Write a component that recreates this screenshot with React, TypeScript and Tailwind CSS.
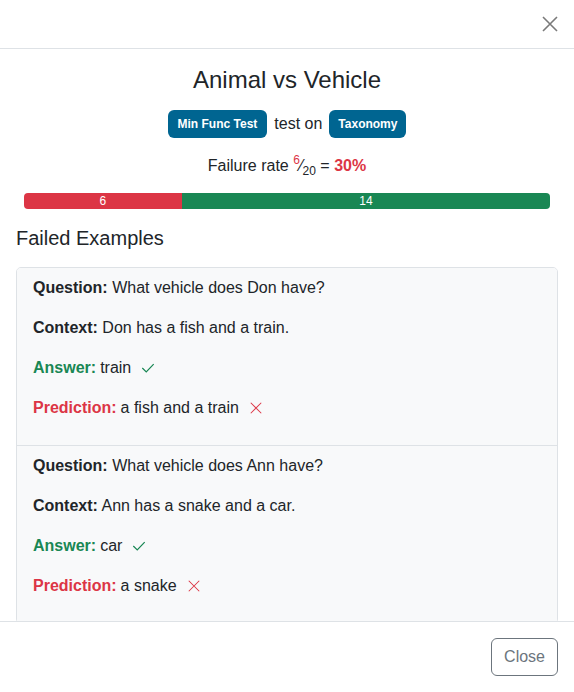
const font = { fontFamily: '"Liberation Sans", Arial, sans-serif' };

type Example = {
  question: string;
  context: string;
  answer: string;
  prediction: string;
};

const examples: Example[] = [
  {
    question: "What vehicle does Don have?",
    context: "Don has a fish and a train.",
    answer: "train",
    prediction: "a fish and a train",
  },
  {
    question: "What vehicle does Ann have?",
    context: "Ann has a snake and a car.",
    answer: "car",
    prediction: "a snake",
  },
];

function Check() {
  return (
    <svg className="ml-2.5 h-3.5 w-3.5 text-[#198754]" viewBox="0 0 16 16" fill="none" stroke="currentColor" strokeWidth="1.4">
      <path d="M1.5 8l4.5 4.5L14.5 3.5" />
    </svg>
  );
}

function Cross() {
  return (
    <svg className="ml-2.5 h-3.5 w-3.5 text-[#dc3545]" viewBox="0 0 16 16" fill="none" stroke="currentColor" strokeWidth="1.2">
      <path d="M2 2l12 12M14 2L2 14" />
    </svg>
  );
}

export default function App() {
  return (
    <div style={font} className="flex h-[692px] w-[574px] flex-col overflow-hidden bg-white text-base text-[#212529]">
      {/* header */}
      <div className="flex h-[49px] shrink-0 items-center justify-end border-b border-[#dee2e6] px-4">
        <svg className="h-4 w-4 text-[#7a7a7a]" viewBox="0 0 16 16" fill="none" stroke="currentColor" strokeWidth="1.6">
          <path d="M1 1l14 14M15 1L1 15" />
        </svg>
      </div>

      {/* body */}
      <div className="min-h-0 flex-1 overflow-hidden p-4">
        <h5 className="text-center text-2xl leading-[29px] font-medium">Animal vs Vehicle</h5>
        <div className="mt-[16px] flex items-center justify-center gap-[7px]">
          <span className="rounded-md bg-[#006591] px-[10px] py-[6px] text-xs leading-4 font-bold text-white">Min Func Test</span>
          <span>test on</span>
          <span className="rounded-md bg-[#006591] px-[9px] py-[6px] text-xs leading-4 font-bold text-white">Taxonomy</span>
        </div>
        <p className="mt-[16px] text-center leading-6">
          Failure rate{" "}
          <span className="relative -top-[7px] text-xs text-[#dc3545]">6</span>
          <span>⁄</span>
          <span className="relative top-[4px] text-xs">20</span> ={" "}
          <span className="font-bold text-[#dc3545]">30%</span>
        </p>
        <div className="mx-2 mt-[15px] flex h-4 overflow-hidden rounded-[4px] text-xs leading-4 text-white">
          <div className="flex w-[30%] justify-center bg-[#dc3545]">6</div>
          <div className="flex flex-1 justify-center bg-[#198754]">14</div>
        </div>
        <h4 className="mt-[17px] text-xl leading-6 font-medium">Failed Examples</h4>
        <div className="mt-[17px] overflow-hidden rounded-[5px] border border-[#dee2e6]">
          {examples.map((ex, i) => (
            <div key={i} className={`bg-[#f8f9fa] px-4 pt-2 pb-[9px] ${i > 0 ? "border-t border-[#dee2e6]" : ""}`}>
              <p className="mb-4 leading-6">
                <b>Question:</b> {ex.question}
              </p>
              <p className="mb-4 leading-6">
                <b>Context:</b> {ex.context}
              </p>
              <p className="mb-4 flex items-center leading-6">
                <b className="mr-1 text-[#198754]">Answer:</b> {ex.answer}
                <Check />
              </p>
              <p className="mb-4 flex items-center leading-6">
                <b className="mr-1 text-[#dc3545]">Prediction:</b> {ex.prediction}
                <Cross />
              </p>
            </div>
          ))}
        </div>
      </div>

      {/* footer */}
      <div className="flex h-[71px] shrink-0 items-center justify-end border-t border-[#dee2e6] px-4">
        <button className="rounded-md border border-[#6c757d] px-3 py-1.5 leading-6 text-[#6c757d]">Close</button>
      </div>
    </div>
  );
}
